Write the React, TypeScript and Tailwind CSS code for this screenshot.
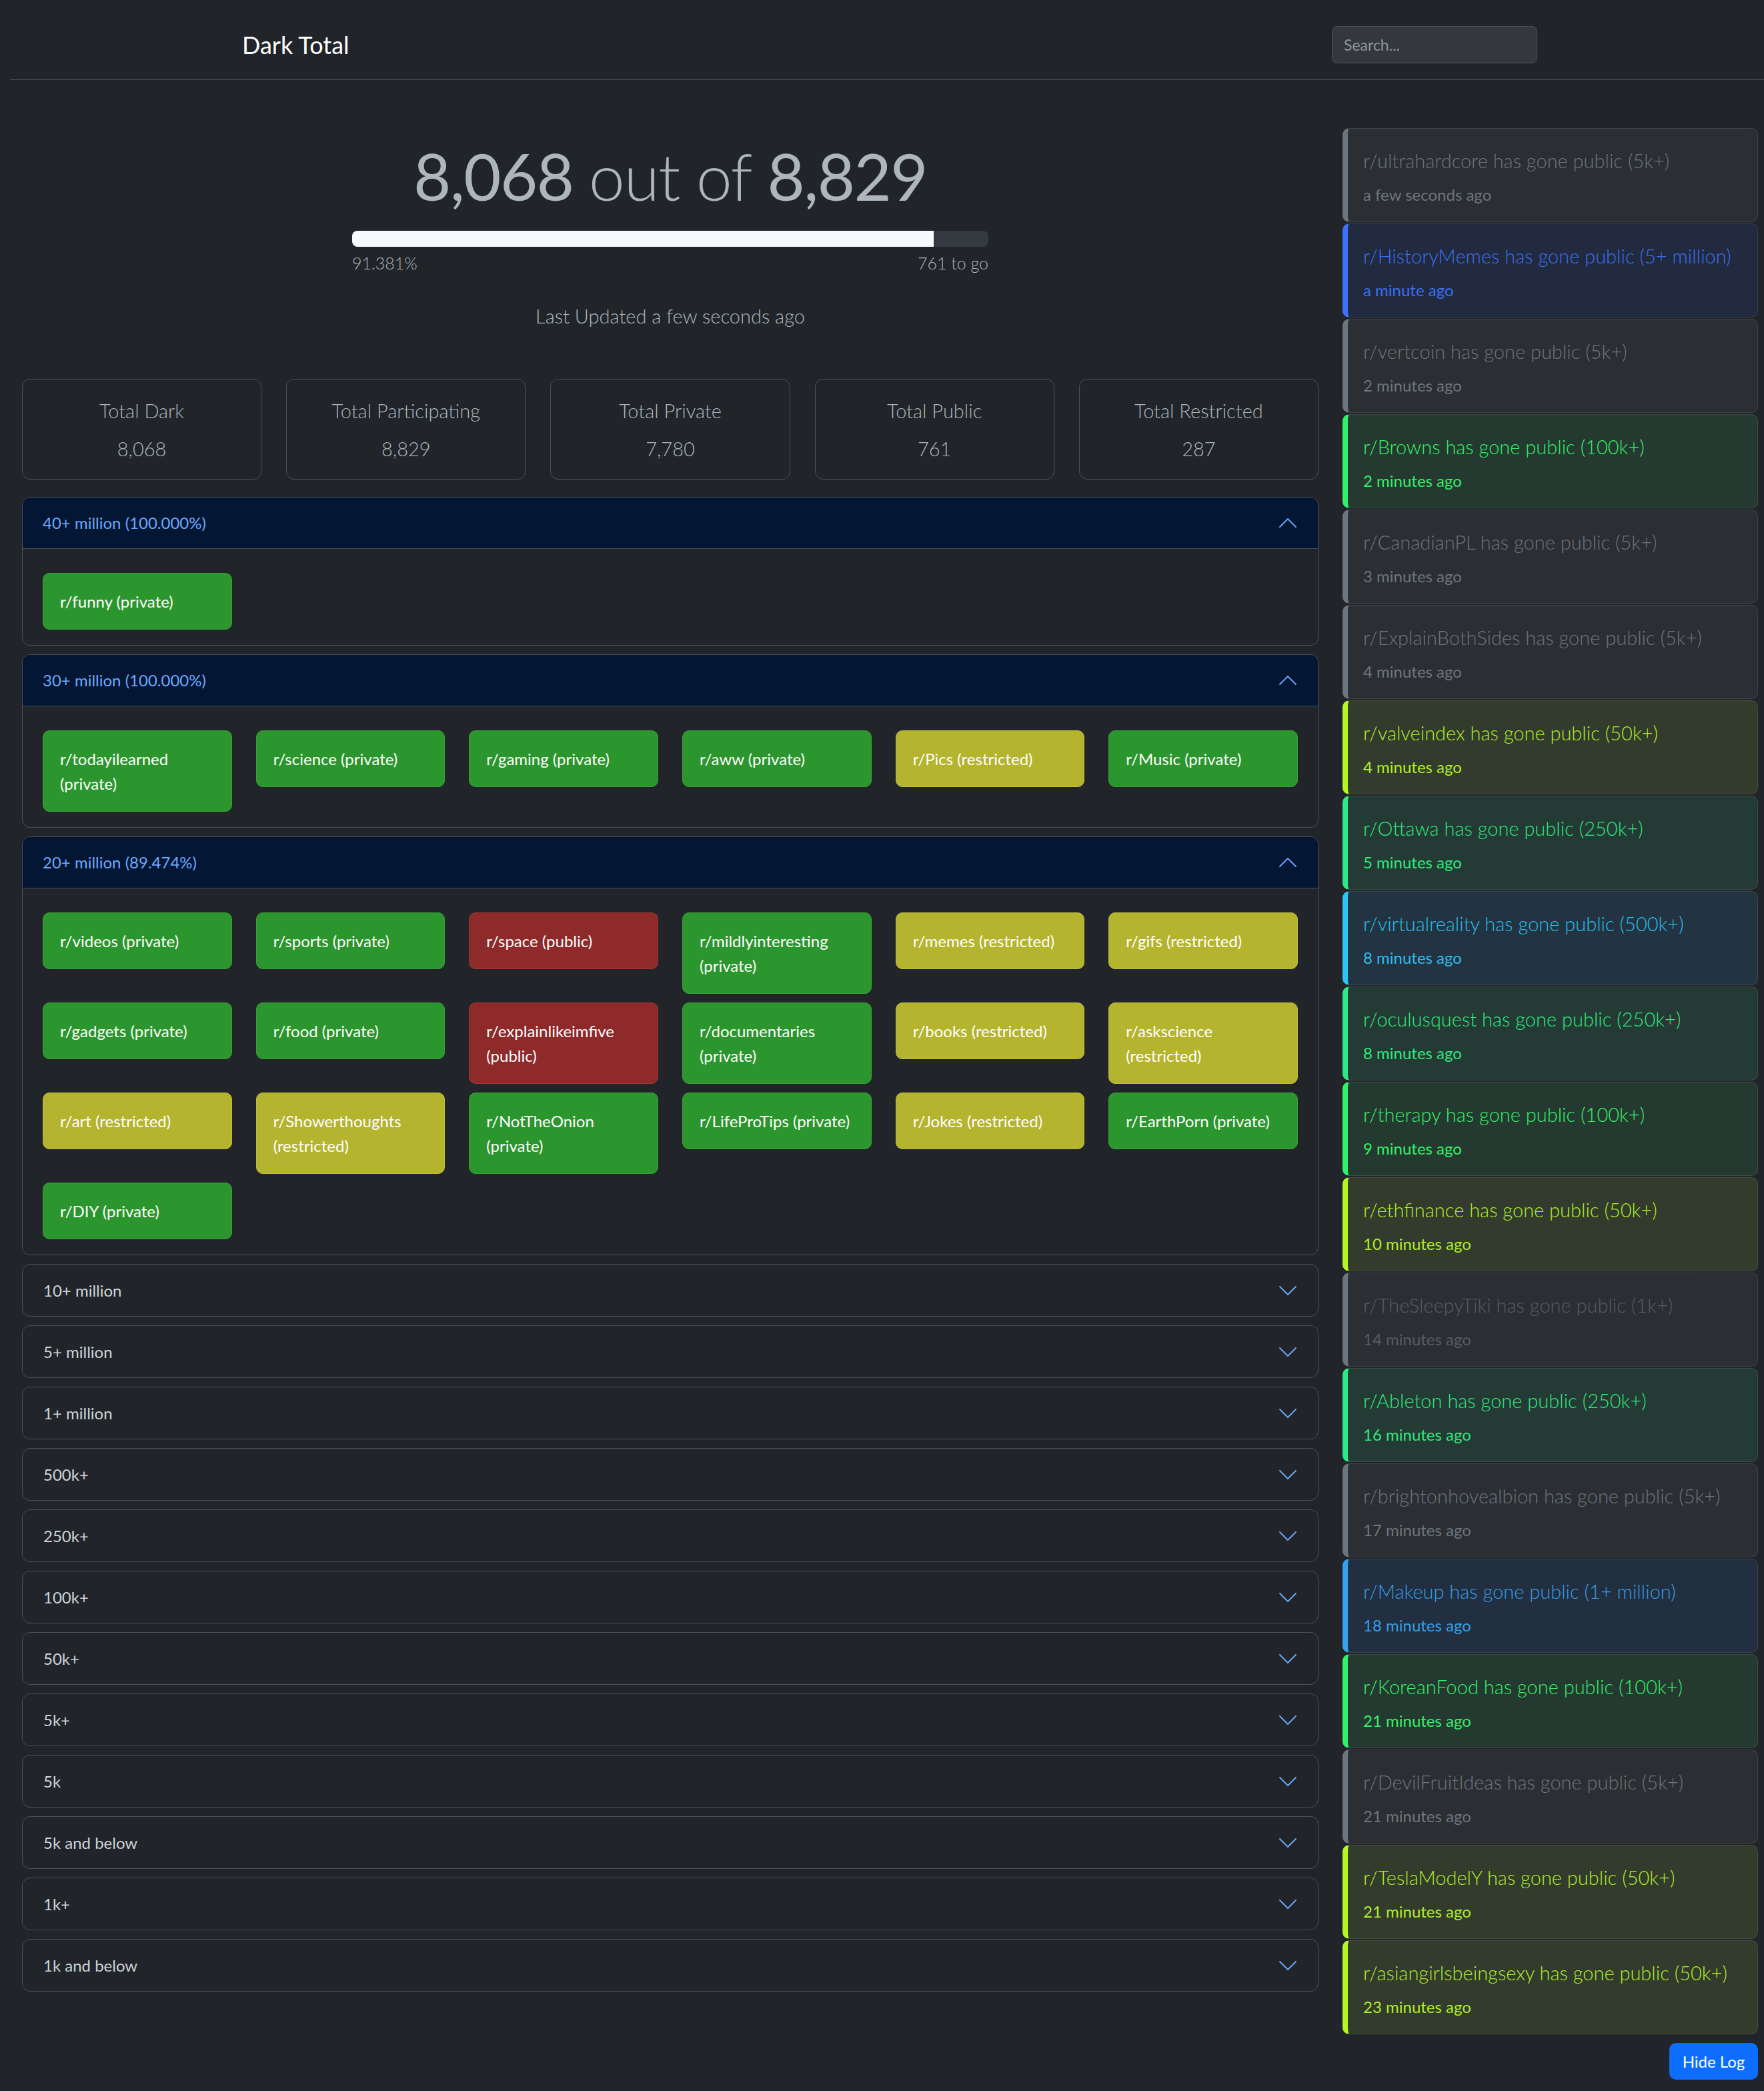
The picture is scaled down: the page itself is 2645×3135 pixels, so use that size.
import React from "react";

type Status = "private" | "restricted" | "public";
type Chip = { n: string; s: Status };

const chipColor: Record<Status, string> = {
  private: "bg-[#2c962e] border-[#3a9f38]",
  restricted: "bg-[#b5b42f] border-[#bebd3d]",
  public: "bg-[#8f2a2b] border-[#9c3838]",
};

const chips40: Chip[] = [{ n: "r/funny", s: "private" }];
const chips30: Chip[] = [
  { n: "r/todayilearned", s: "private" },
  { n: "r/science", s: "private" },
  { n: "r/gaming", s: "private" },
  { n: "r/aww", s: "private" },
  { n: "r/Pics", s: "restricted" },
  { n: "r/Music", s: "private" },
];
const chips20: Chip[] = [
  { n: "r/videos", s: "private" },
  { n: "r/sports", s: "private" },
  { n: "r/space", s: "public" },
  { n: "r/mildlyinteresting", s: "private" },
  { n: "r/memes", s: "restricted" },
  { n: "r/gifs", s: "restricted" },
  { n: "r/gadgets", s: "private" },
  { n: "r/food", s: "private" },
  { n: "r/explainlikeimfive", s: "public" },
  { n: "r/documentaries", s: "private" },
  { n: "r/books", s: "restricted" },
  { n: "r/askscience", s: "restricted" },
  { n: "r/art", s: "restricted" },
  { n: "r/Showerthoughts", s: "restricted" },
  { n: "r/NotTheOnion", s: "private" },
  { n: "r/LifeProTips", s: "private" },
  { n: "r/Jokes", s: "restricted" },
  { n: "r/EarthPorn", s: "private" },
  { n: "r/DIY", s: "private" },
];

const collapsed = [
  "10+ million",
  "5+ million",
  "1+ million",
  "500k+",
  "250k+",
  "100k+",
  "50k+",
  "5k+",
  "5k",
  "5k and below",
  "1k+",
  "1k and below",
];

type Tone = "gray" | "dim" | "blue" | "green" | "mint" | "lime" | "cyan" | "sky";

const toneClass: Record<Tone, string> = {
  gray: "bg-[#2b2e33] border-l-[#6c757d] text-[#6f757b]",
  dim: "bg-[#2b2e33] border-l-[#6c757d] text-[#575c62]",
  blue: "bg-[#212a3f] border-l-[#3d72ff] text-[#3c6ff2]",
  green: "bg-[#243a30] border-l-[#33f06a] text-[#38ee68]",
  mint: "bg-[#243a34] border-l-[#2ee884] text-[#2ee87f]",
  lime: "bg-[#323b2c] border-l-[#b4f52a] text-[#b0ee2a]",
  cyan: "bg-[#223441] border-l-[#2ec5f5] text-[#2dbdee]",
  sky: "bg-[#212f40] border-l-[#36a2eb] text-[#379ee6]",
};

const logs: { sub: string; size: string; time: string; tone: Tone }[] = [
  { sub: "ultrahardcore", size: "5k+", time: "a few seconds ago", tone: "gray" },
  { sub: "HistoryMemes", size: "5+ million", time: "a minute ago", tone: "blue" },
  { sub: "vertcoin", size: "5k+", time: "2 minutes ago", tone: "gray" },
  { sub: "Browns", size: "100k+", time: "2 minutes ago", tone: "green" },
  { sub: "CanadianPL", size: "5k+", time: "3 minutes ago", tone: "gray" },
  { sub: "ExplainBothSides", size: "5k+", time: "4 minutes ago", tone: "gray" },
  { sub: "valveindex", size: "50k+", time: "4 minutes ago", tone: "lime" },
  { sub: "Ottawa", size: "250k+", time: "5 minutes ago", tone: "mint" },
  { sub: "virtualreality", size: "500k+", time: "8 minutes ago", tone: "cyan" },
  { sub: "oculusquest", size: "250k+", time: "8 minutes ago", tone: "mint" },
  { sub: "therapy", size: "100k+", time: "9 minutes ago", tone: "green" },
  { sub: "ethfinance", size: "50k+", time: "10 minutes ago", tone: "lime" },
  { sub: "TheSleepyTiki", size: "1k+", time: "14 minutes ago", tone: "dim" },
  { sub: "Ableton", size: "250k+", time: "16 minutes ago", tone: "mint" },
  { sub: "brightonhovealbion", size: "5k+", time: "17 minutes ago", tone: "gray" },
  { sub: "Makeup", size: "1+ million", time: "18 minutes ago", tone: "sky" },
  { sub: "KoreanFood", size: "100k+", time: "21 minutes ago", tone: "green" },
  { sub: "DevilFruitIdeas", size: "5k+", time: "21 minutes ago", tone: "gray" },
  { sub: "TeslaModelY", size: "50k+", time: "21 minutes ago", tone: "lime" },
  { sub: "asiangirlsbeingsexy", size: "50k+", time: "23 minutes ago", tone: "lime" },
];

function Chevron({ up }: { up: boolean }) {
  return (
    <svg width="26" height="14" viewBox="0 0 26 14" fill="none" stroke="#6ea8fe" strokeWidth="1.8" strokeLinecap="round" strokeLinejoin="round">
      {up ? <polyline points="1,13 13,1 25,13" /> : <polyline points="1,1 13,13 25,1" />}
    </svg>
  );
}

function Expanded({ title, chips }: { title: string; chips: Chip[] }) {
  return (
    <div className="overflow-hidden rounded-[12px] border border-[#495057]">
      <div className="flex h-[77px] items-center justify-between border-b border-[#495057] bg-[#031633] pl-[30px] pr-[32px]">
        <span className="text-[24px] leading-[36px] text-[#6ea8fe]">{title}</span>
        <Chevron up />
      </div>
      <div className="grid grid-cols-6 items-start gap-x-[36px] gap-y-[13px] px-[30px] pt-[36px] pb-[23px]">
        {chips.map((c) => (
          <div key={c.n} className={`rounded-[10px] border px-[25px] py-[23px] text-[24px] leading-[37px] text-white ${chipColor[c.s]}`}>
            {c.n} ({c.s})
          </div>
        ))}
      </div>
    </div>
  );
}

function Collapsed({ title }: { title: string }) {
  return (
    <div className="flex h-[79px] items-center justify-between rounded-[12px] border border-[#495057] pl-[31px] pr-[32px]">
      <span className="text-[24px] leading-[36px] text-[#ced4da]">{title}</span>
      <Chevron up={false} />
    </div>
  );
}

function Stat({ label, value }: { label: string; value: string }) {
  return (
    <div className="rounded-[12px] border border-[#495057] pt-[27px] pb-[25px] text-center font-light text-[#adb5bd]">
      <div className="text-[29px] leading-[40px]">{label}</div>
      <div className="mt-[17px] text-[29px] leading-[40px]">{value}</div>
    </div>
  );
}

export default function App() {
  return (
    <div className="min-h-screen bg-[#212529] pb-[16px] [font-family:Lato,'Open_Sans',sans-serif]">
      <nav className="ml-[15px] flex items-center border-b border-[#495057] pt-[39px] pb-[24px]">
        <div className="w-[1982px] pl-[348px] text-[36px] leading-[48px] text-white">Dark Total</div>
        <input
          placeholder="Search..."
          className="h-[56px] w-[308px] rounded-[8px] border border-[#495057] bg-[#34383e] pl-[17px] text-[23px] text-[#dee2e6] outline-none placeholder:text-[#8e959b]"
        />
      </nav>

      <div className="flex items-start pt-[72px] pl-[33px] pr-[9px]">
        <main className="w-[1944px]">
          <div className="mt-[5px] text-center text-[97px] leading-[134px] tracking-[-1.5px] text-[#adb5bd]">
            <span className="font-normal">8,068</span> <span className="font-light">out of</span>{" "}
            <span className="font-normal">8,829</span>
          </div>
          <div className="mx-auto mt-[15px] w-[954px]">
            <div className="h-[24px] overflow-hidden rounded-[8px] bg-[#343a40]">
              <div className="h-full bg-[#f8f9fa]" style={{ width: "91.381%" }} />
            </div>
            <div className="mt-[5px] flex justify-between text-[25px] font-light leading-[39px] text-[#adb5bd]">
              <span>91.381%</span>
              <span>761 to go</span>
            </div>
          </div>
          <div className="mt-[40px] text-center text-[29px] font-light leading-[40px] text-[#adb5bd]">
            Last Updated a few seconds ago
          </div>

          <div className="mt-[74px] grid grid-cols-5 gap-[37px]">
            <Stat label="Total Dark" value="8,068" />
            <Stat label="Total Participating" value="8,829" />
            <Stat label="Total Private" value="7,780" />
            <Stat label="Total Public" value="761" />
            <Stat label="Total Restricted" value="287" />
          </div>

          <div className="mt-[26px] flex flex-col gap-[13px]">
            <Expanded title="40+ million (100.000%)" chips={chips40} />
            <Expanded title="30+ million (100.000%)" chips={chips30} />
            <Expanded title="20+ million (89.474%)" chips={chips20} />
            {collapsed.map((t) => (
              <Collapsed key={t} title={t} />
            ))}
          </div>
        </main>

        <aside className="ml-[36px] flex w-[623px] flex-col">
          <div className="flex flex-col gap-[2px]">
            {logs.map((l) => (
              <div
                key={l.sub}
                className={`rounded-[10px] border border-white/10 border-l-[8px] pl-[23px] pr-[12px] pt-[28px] pb-[24px] ${toneClass[l.tone]}`}
              >
                <div className="whitespace-nowrap text-[29px] font-light leading-[40px]">
                  r/{l.sub} has gone public ({l.size})
                </div>
                <div className="mt-[15px] text-[24px] leading-[32px]">{l.time}</div>
              </div>
            ))}
          </div>
          <button className="mt-[13px] ml-auto h-[55px] w-[133px] rounded-[10px] bg-[#0d6efd] text-[24px] text-white">
            Hide Log
          </button>
        </aside>
      </div>
    </div>
  );
}
